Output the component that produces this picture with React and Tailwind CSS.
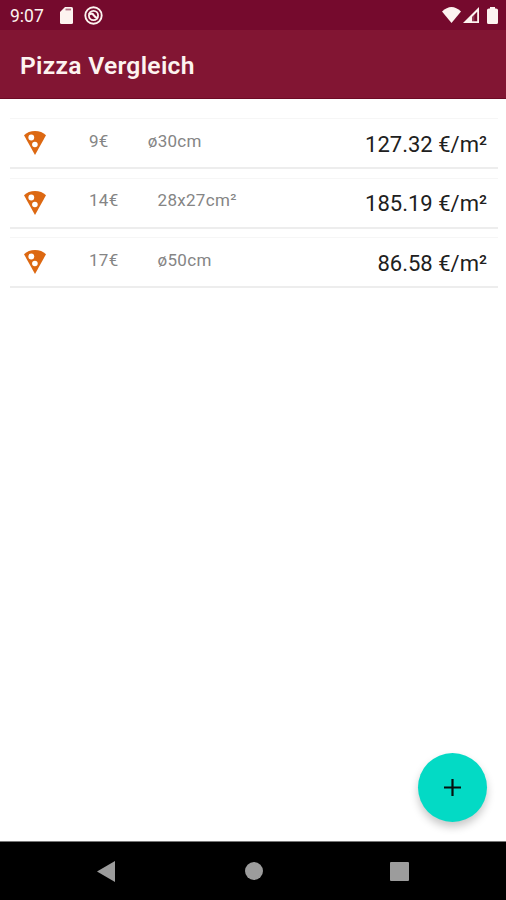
const pizzas = [
    { price: '9€', size: 'ø30cm', ratio: '127.32 €/m²' },
    { price: '14€', size: '28x27cm²', ratio: '185.19 €/m²' },
    { price: '17€', size: 'ø50cm', ratio: '86.58 €/m²' },
];

export default function App() {
    return (
        <div className="relative w-full h-[900px] bg-white flex flex-col overflow-hidden font-['Roboto',sans-serif]">
            <StatusBar />

            <header className="h-[69px] bg-[#821533] border-b border-[#6d0a25] flex items-center pl-[20px] pt-[5px]">
                <h1 className="text-[24.6px] tracking-[0.3px] font-semibold text-[#fdf3f0]">Pizza Vergleich</h1>
            </header>

            <main className="flex-1 flex flex-col gap-[8.5px] pt-[19px] pl-[10px] pr-[8px]">
                {pizzas.map((pizza) => (
                    <PizzaRow key={pizza.ratio} {...pizza} />
                ))}
            </main>

            {/* Add button */}
            <button className="absolute left-[418px] top-[753px] w-[69px] h-[69px] rounded-full bg-[#03dac5] flex items-center justify-center shadow-[0_5px_8px_rgba(0,0,0,0.22)]">
                <svg width="17" height="17" viewBox="0 0 17 17" fill="#06110f">
                    <path d="M7.400 0h2.200v7.400H17v2.200H9.600V17H7.400V9.600H0V7.400h7.400z" />
                </svg>
            </button>

            <NavBar />
        </div>
    );
}

function StatusBar() {
    return (
        <div className="h-[30px] bg-[#750a2d] flex items-center pl-[10px] pr-[8px] text-[#fdf3f0]">
            <span className="w-[50px] text-[17.5px] leading-none pt-[3px]">9:07</span>
            {/* SD card */}
            <svg className="mt-px" width="13" height="17" viewBox="0 0 13 17">
                <path fill="currentColor" d="M5 0h6.500Q13 0 13 1.500v14q0 1.500-1.500 1.500h-10Q0 17 0 15.500V5z" />
                <path stroke="#750a2d" strokeOpacity=".55" strokeWidth="1.800" d="M5.500 2.500h5.500" />
            </svg>
            <svg className="ml-[11px] mt-px" width="19" height="19" viewBox="0 0 19 19" fill="none" stroke="currentColor">
                <circle cx="9.500" cy="9.500" r="8.200" strokeWidth="1.900" />
                <circle cx="9.500" cy="9.500" r="4.600" strokeWidth="1.800" />
                <path strokeWidth="2.200" d="M5 8.500Q8 6.500 9.500 9t4.500 3.500" />
            </svg>
            <div className="flex-1" />
            {/* Wifi */}
            <svg width="19" height="16" viewBox="0 0 19 16">
                <path fill="currentColor" d="M0 4.500Q9.500-4.500 19 4.500L9.500 16z" />
            </svg>
            {/* Mobile signal */}
            <svg className="ml-[2px]" width="16" height="16" viewBox="0 0 16 16">
                <path fill="currentColor" fillRule="evenodd" d="M16 0v16H0zM14.200 4.800L9 10v4.200h5.200z" />
                <path fill="currentColor" fillOpacity=".2" d="M9 10v4.200h2.400V7.600z" />
            </svg>
            <svg className="ml-[8px]" width="11" height="17" viewBox="0 0 11 17">
                <path fill="currentColor" d="M3 0h5v1.400h1q2 0 2 1.600V15.500Q11 17 9.500 17h-8Q0 17 0 15.500V3q0-1.600 2-1.600h1z" />
            </svg>
        </div>
    );
}

function PizzaIcon() {
    return (
        <svg className="ml-[4px]" width="22" height="24" viewBox="0 0 22 24">
            <path fill="#dc6812" d="M11 0C6.700 0 2.700 1.500 0 4.200L11 24 22 4.200C19.300 1.500 15.300 0 11 0z" />
            <circle cx="7.300" cy="6.500" r="2.900" fill="#fff" />
            <circle cx="10.900" cy="13.500" r="2.800" fill="#fff" />
        </svg>
    );
}

function PizzaRow({ price, size, ratio }) {
    return (
        <div className="h-[51px] flex items-center pl-[10px] pr-[11px] border-t border-t-[#f6f6f6] border-b-2 border-b-[#ededed]">
            <PizzaIcon />
            <div className="ml-[43px] pb-[5px] flex gap-[39px] text-[17px] leading-[22px] tracking-[0.3px] text-[#858585]">
                <span>{price}</span>
                <span>{size}</span>
            </div>
            <span className="ml-auto pt-[3px] text-[22px] leading-[26px] text-[#202020]">{ratio}</span>
        </div>
    );
}

function NavBar() {
    return (
        <nav className="h-[59px] bg-black border-t border-[#777] flex items-center pl-[97px] pr-[97px] justify-between">
            <svg width="18" height="21" viewBox="0 0 18 21" fill="#9c9c9c">
                <path d="M18 0v21L0 10.500z" />
            </svg>
            <div className="w-[18px] h-[18px] rounded-full bg-[#9c9c9c] ml-[2px]" />
            <div className="w-[19px] h-[19px] rounded-[1px] bg-[#9c9c9c]" />
        </nav>
    );
}
